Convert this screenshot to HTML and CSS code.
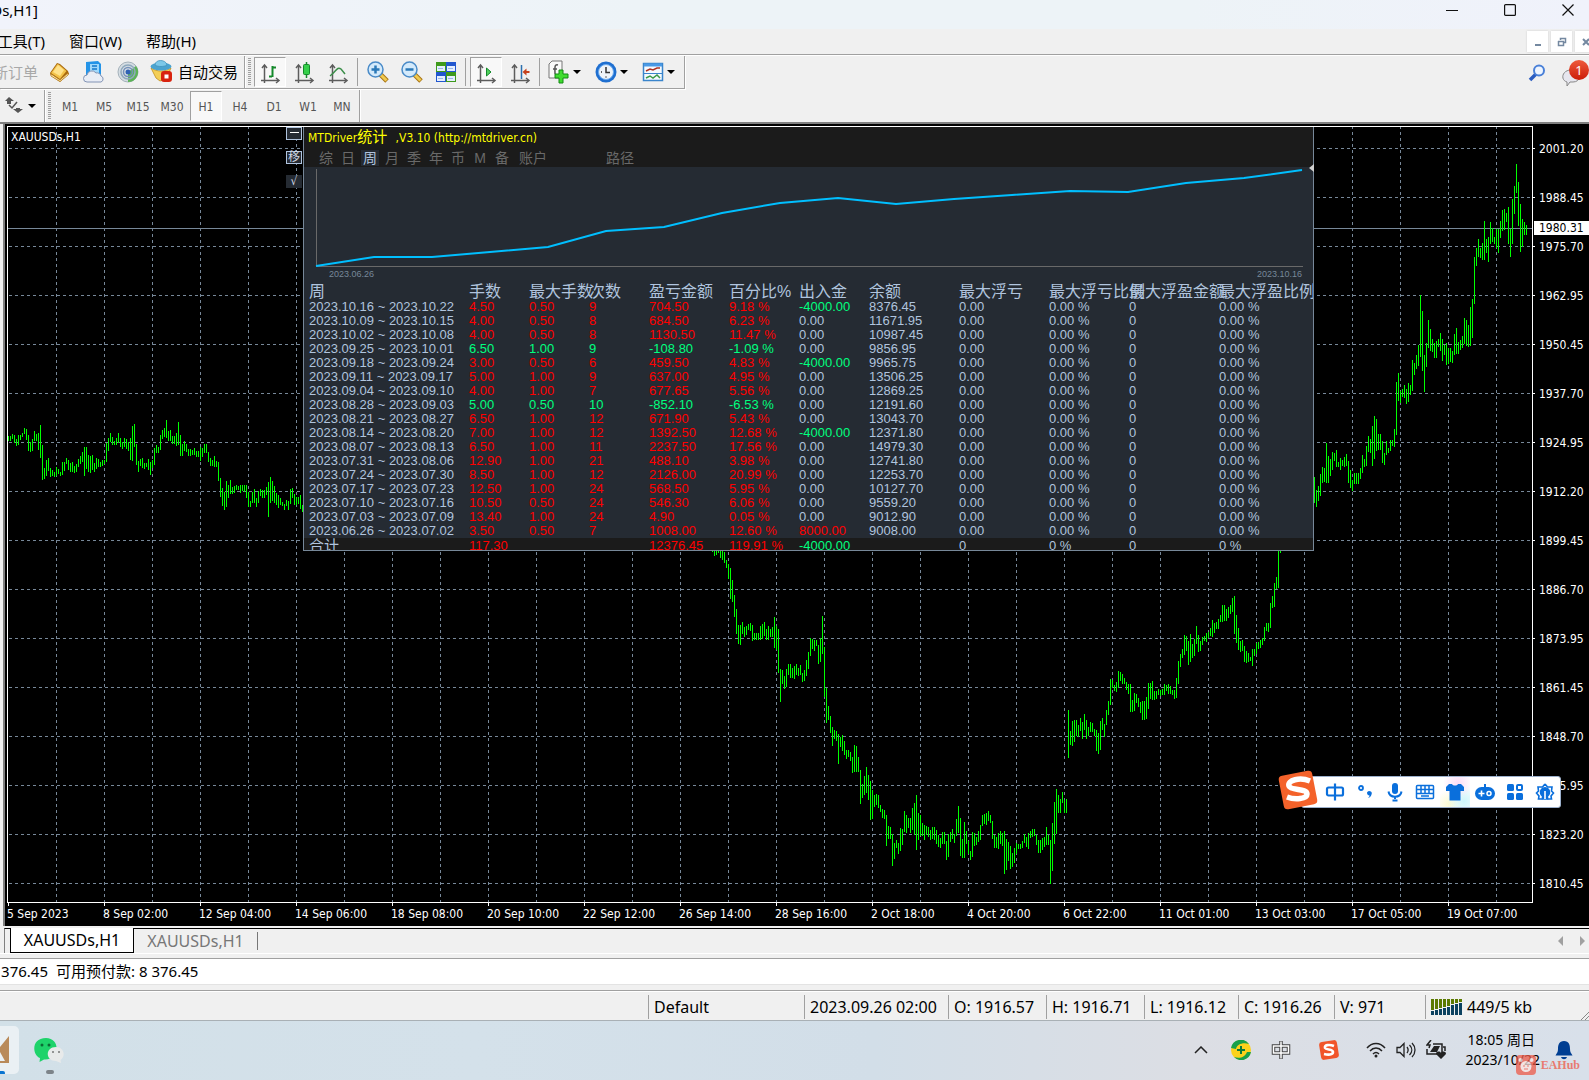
FILE: index.html
```html
<!DOCTYPE html>
<html lang="zh-CN">
  <head>
    <meta charset="UTF-8" />
    <meta name="viewport" content="width=device-width, initial-scale=1.0" />
    <title>XAUUSDs,H1</title>
    <link rel="stylesheet" href="styles.css">
  </head>
  <body>
    <header class="titlebar">
      <div class="title-text"><span>[XAUUSDs,H1]</span></div>
      <div class="window-buttons">
        <button aria-label="最小化"><svg width="12" height="12"><path d="M0 6.5h12" stroke="#111" /></svg></button>
        <button aria-label="最大化"><svg width="12" height="12"><rect x="0.6" y="0.6" width="10.8" height="10.8" rx="1" fill="none" stroke="#111" stroke-width="1.2" /></svg></button>
        <button aria-label="关闭"><svg width="12" height="12"><path d="M0.5 0.5l11 11M11.5 0.5l-11 11" stroke="#111" stroke-width="1.2" /></svg></button>
      </div>
    </header>

    <nav class="menubar">
      <button class="menu-first">工具(T)</button>
      <button>窗口(W)</button>
      <button>帮助(H)</button>
      <div class="mdi-buttons">
        <button aria-label="最小化图表"><svg width="10" height="10"><path d="M2 8h6" stroke="#7488a0" stroke-width="2" /></svg></button>
        <button aria-label="还原图表"><svg width="10" height="10" fill="none" stroke="#7488a0"><path d="M3.5 3V1.500h5v4H7M3 1.500h6" stroke-width="1.500" /><path d="M1 4.500h6M1.500 4v4.500h5V4" stroke-width="1.500" /></svg></button>
        <button aria-label="关闭图表"><svg width="10" height="10"><path d="M2 2l6 6M8 2l-6 6" stroke="#7488a0" stroke-width="2" /></svg></button>
      </div>
    </nav>

    <div class="toolbar-row">
      <div class="toolbar">
        <button class="new-order" disabled><span>新订单</span></button>
        <button class="tool" aria-label="市场报价">
          <svg width="24" height="24"><path d="M2 13L9 3l3 1 8 7 1 3-9 8-9-6z" fill="#a8690d" /><path d="M3 13L9.500 4l2 1 7 6-6.500 8z" fill="#f3c34a" /><path d="M5 12l5-7 6 5-4 6z" fill="#ffe28a" /><path d="M12 20l8-7v2l-8 6.500L3 16v-2z" fill="#fff2b8" stroke="#b87815" stroke-width=".7" /></svg>
        </button>
        <button class="tool" aria-label="数据窗口">
          <svg width="24" height="24"><path d="M4 2l12-1 3 3v13H4z" fill="#2494e8" /><path d="M8 4h9v11H8z" fill="#9fd8fb" /><path d="M10 6h5M10 9h5" stroke="#1478cc" stroke-width="1.500" /><path d="M5 22a3.500 3.500 0 0 1 0-7 5 5 0 0 1 9-2 4 4 0 0 1 5 3 3.200 3.200 0 0 1 0 6z" fill="#e9edf5" stroke="#8293b4" /></svg>
        </button>
        <button class="tool" aria-label="信号">
          <svg width="24" height="24" fill="none"><circle cx="12" cy="12" r="10" fill="#d5dde3" stroke="#a4b1ba" /><path d="M12 12V22A10 10 0 0 0 20 6z" fill="#5cb357" /><circle cx="12" cy="12" r="7" stroke="#8fa9bd" stroke-width="1.500" /><circle cx="12" cy="12" r="4.500" stroke="#7591ba" stroke-width="1.500" /><circle cx="12" cy="12" r="2.500" fill="#2f62b4" /></svg>
        </button>
        <button class="auto-trade">
          <svg width="24" height="24"><path d="M2 9c6 4 14 4 20 0l-5 11-6 2-4-3z" fill="#f4cf58" stroke="#c28f1c" stroke-width=".8" /><ellipse cx="12" cy="7.500" rx="10.500" ry="4" fill="#4aa3cf" /><path d="M6 6c0-6 11-6 12 0-3 2-9 2-12 0z" fill="#7cc8e8" stroke="#388cb8" stroke-width=".7" /><rect x="12" y="12" width="11" height="11" rx="3" fill="#d8230f" /><rect x="15.500" y="15.500" width="4" height="4" fill="#fff" /></svg>
          自动交易
        </button>
      </div>
      <div class="toolbar">
        <span class="grip"></span>
        <button class="tool pressed" aria-label="柱状图">
          <svg width="24" height="24" fill="none"><g class="axes"><path d="M6.500 6v17M3 20.500h17" /><path d="M4 8l2.500-3L9 8M18 18l3 2.500-3 2.500" /></g><path d="M14.500 6v11M11 16.500h3M15 7.500h3" stroke="#15892b" stroke-width="2" /></svg>
        </button>
        <button class="tool" aria-label="阴阳烛">
          <svg width="24" height="24" fill="none"><g class="axes"><path d="M6.500 6v17M3 20.500h17" /><path d="M4 8l2.500-3L9 8M18 18l3 2.500-3 2.500" /></g><path d="M14.500 2v16" stroke="#15892b" stroke-width="1.500" /><rect x="11.500" y="4.500" width="6" height="10" rx="1" fill="#35cf4a" stroke="#15892b" /></svg>
        </button>
        <button class="tool" aria-label="折线图">
          <svg width="24" height="24" fill="none"><g class="axes"><path d="M6.500 6v17M3 20.500h17" /><path d="M4 8l2.500-3L9 8M18 18l3 2.500-3 2.500" /></g><path d="M4 16C10 12 11 6 15 9l4 5" stroke="#3c8e4a" stroke-width="1.500" /></svg>
        </button>
        <span class="sep"></span>
        <button class="tool" aria-label="放大">
          <svg width="24" height="24" fill="none"><path d="M14 14l7 7" stroke="#a87412" stroke-width="5" /><path d="M14 14l6.500 6.500" stroke="#f0ca50" stroke-width="3" /><circle cx="9.500" cy="9.500" r="7.500" fill="#d4eafb" stroke="#4a8bc8" stroke-width="1.500" /><path d="M9.500 5.500v8M5.500 9.500h8" stroke="#2a78b8" stroke-width="2.500" /></svg>
        </button>
        <button class="tool" aria-label="缩小">
          <svg width="24" height="24" fill="none"><path d="M14 14l7 7" stroke="#a87412" stroke-width="5" /><path d="M14 14l6.500 6.500" stroke="#f0ca50" stroke-width="3" /><circle cx="9.500" cy="9.500" r="7.500" fill="#d4eafb" stroke="#4a8bc8" stroke-width="1.500" /><path d="M5.500 9.500h8" stroke="#2a78b8" stroke-width="2.500" /></svg>
        </button>
        <button class="tool" aria-label="平铺窗口">
          <svg width="24" height="24"><path d="M2 2h10v10H2zM12 12h10v10H12z" fill="#3f9a1c" /><path d="M12 2h10v10H12zM2 12h10v10H2z" fill="#2257cf" /><path d="M3 6h8v5H3zM13 6h8v5h-8zM3 16h8v5H3zM13 16h8v5h-8z" fill="#e6efff" /><path d="M4 8.500h5M14 8.500h5M4 18.500h5M14 18.500h5" stroke="#9ab8e8" /></svg>
        </button>
        <span class="sep"></span>
        <button class="tool pressed" aria-label="自动滚动">
          <svg width="24" height="24" fill="none"><g class="axes"><path d="M6.500 6v17M3 20.500h17" /><path d="M4 8l2.500-3L9 8M18 18l3 2.500-3 2.500" /></g><path d="M12.500 8v8l4.500-4z" fill="#4fd05c" stroke="#15892b" /></svg>
        </button>
        <button class="tool" aria-label="图表平移">
          <svg width="24" height="24" fill="none"><g class="axes"><path d="M6.500 6v17M3 20.500h17" /><path d="M4 8l2.500-3L9 8M18 18l3 2.500-3 2.500" /></g><path d="M13.500 5v14" stroke="#2b6fae" stroke-width="1.500" /><path d="M14.500 12l4-3.500V11h3v2h-3v2.500z" fill="#c6401c" /></svg>
        </button>
        <span class="sep"></span>
        <button class="tool drop" aria-label="技术指标">
          <svg width="24" height="24"><path d="M2 4l3-3h10v17H2z" fill="#fafafa" stroke="#777" /><path d="M11 5c-4-1-3 3-3 9M6 9h4" fill="none" stroke="#555" stroke-width="1.500" /><path d="M12 10h4v4h5v4h-5v5h-4v-5H8v-4h4z" fill="#3fdc2f" stroke="#138a15" /></svg>
          <i class="caret"></i>
        </button>
        <button class="tool drop" aria-label="时间周期">
          <svg width="24" height="24" fill="none"><circle cx="12" cy="12" r="10.500" fill="#1f6fd0" /><circle cx="12" cy="12" r="7.500" fill="#eef3f8" stroke="#6aaaf0" /><path d="M12 7v5.500h4M7 12h1M12 16.500v1" stroke="#333" stroke-width="1.500" /></svg>
          <i class="caret"></i>
        </button>
        <button class="tool drop" aria-label="模板">
          <svg width="24" height="24" fill="none"><rect x="2.500" y="3.500" width="19" height="17" fill="#f4faff" stroke="#3a85cc" stroke-width="1.500" /><path d="M3 5h18" stroke="#4a9ae6" stroke-width="3" /><path d="M3 13.500h18" stroke="#3a85cc" /><path d="M5 11l4-2 3 1 4-2h3" stroke="#b03222" stroke-width="1.500" /><path d="M5 18l4-2 3 2 4-3 3 3" stroke="#3a9a48" stroke-width="1.500" /></svg>
          <i class="caret"></i>
        </button>
      </div>
      <div class="toolbar-right">
        <button aria-label="搜索"><svg width="18" height="18" fill="none"><path d="M8 10l-6 6" stroke="#2a5cc0" stroke-width="3.500" /><circle cx="11" cy="6.500" r="5" fill="#eef5ff" stroke="#4a80d8" stroke-width="2" /></svg></button>
        <button class="chat" aria-label="消息"><svg width="20" height="20"><path d="M10 2c11 0 11 12 2 12H9l-3 4v-4C-1 12 1 2 10 2z" fill="#e6e6ee" stroke="#888" /></svg><span class="badge">1</span></button>
      </div>
    </div>

    <div class="toolbar-row periods-row">
      <div class="toolbar arrows">
        <button aria-label="箭头">
          <svg width="20" height="20"><path d="M5 1l5 4h-3v3H3V5H1zM14 17l-5-4h3v-1h4v1h3z" fill="#555" /><path d="M5 9l3 3 5-6" stroke="#555" stroke-width="1.500" fill="none" /></svg>
          <i class="caret"></i>
        </button>
      </div>
      <div class="toolbar">
        <span class="grip"></span>
        <button class="period">M1</button>
        <button class="period">M5</button>
        <button class="period">M15</button>
        <button class="period">M30</button>
        <button class="period pressed">H1</button>
        <button class="period">H4</button>
        <button class="period">D1</button>
        <button class="period">W1</button>
        <button class="period">MN</button>
      </div>
    </div>

    <main class="chart">
      <div class="plot">
        <span class="symbol">XAUUSDs,H1</span>
        <svg id="plot" width="100%" height="100%"></svg>
      </div>
      <div class="price-axis" id="priceAxis"></div>
      <div class="time-axis" id="timeAxis"></div>
      <span class="price-now">1980.31</span>

      <div class="side-buttons">
        <button aria-label="收起"><svg width="13" height="11"><path d="M2 4.500h9" stroke="#fff" /></svg></button>
        <button>移</button>
        <button class="plain">√</button>
      </div>

      <section class="stats">
        <div class="stats-head">
          <h1>MTDriver<span>统计</span> ,V3.10 (http://mtdriver.cn)</h1>
          <div class="stats-tabs">
            <button>综</button>
            <button>日</button>
            <button class="active">周</button>
            <button>月</button>
            <button>季</button>
            <button>年</button>
            <button>币</button>
            <button>M</button>
            <button>备</button>
            <button class="wide">账户</button>
            <button class="wide path">路径</button>
          </div>
        </div>
        <svg class="equity" width="100%" height="100">
          <path d="M12.500 2v97.500H999" fill="none" stroke="#696969" />
          <polyline points="12,99 70,90 128,90 186,85 244,80 302,64 360,60 418,46 476,36 534,31 592,37 650,32 708,28 766,24 824,25 882,16 940,11 998,3" fill="none" stroke="#00bfff" stroke-width="2" />
        </svg>
        <div class="equity-dates"><span>2023.06.26</span><span>2023.10.16</span></div>
        <table>
          <colgroup>
            <col class="w160"><col class="w60"><col class="w60"><col class="w60"><col class="w80"><col class="w70"><col class="w70"><col class="w90"><col class="w90"><col class="w80"><col class="w90"><col class="w90">
          </colgroup>
          <thead>
            <tr>
              <th>周</th><th>手数</th><th>最大手数</th><th>次数</th><th>盈亏金额</th><th>百分比%</th><th>出入金</th><th>余额</th><th>最大浮亏</th><th>最大浮亏比例</th><th>最大浮盈金额</th><th>最大浮盈比例</th>
            </tr>
          </thead>
          <tbody id="weeks"></tbody>
          <tfoot>
            <tr>
              <td class="sum">合计</td><td class="red">117.30</td><td></td><td></td><td class="red">12376.45</td><td class="red">119.91 %</td><td class="green">-4000.00</td><td></td><td>0</td><td>0 %</td><td>0</td><td>0 %</td>
            </tr>
          </tfoot>
        </table>
      </section>
      <i class="stats-arrow"></i>

      <div class="ime">
        <svg class="ime-logo" width="42" height="42"><rect x="4" y="4" width="34" height="34" rx="4" fill="#f4622a" transform="rotate(-11 21 21)" /><path d="M33 12C23 8 10 11 12 17c2 5 18 2 18 8 0 5-12 6-20 3" fill="none" stroke="#fff" stroke-width="5.500" /></svg>
        <button aria-label="中文"><svg width="20" height="20" fill="none" stroke="#0a6fdc" stroke-width="2.200"><rect x="2" y="5.500" width="16" height="8" rx="1.500" /><path d="M10 1.500v17" /></svg></button>
        <button aria-label="标点"><svg width="20" height="20"><circle cx="6" cy="6" r="2" fill="none" stroke="#0a6fdc" stroke-width="1.800" /><path d="M12 10.500a2.400 2.400 0 1 1 4.500 2c-.5 2-1.500 3-3.500 3.500 1-1 1.500-1.500 1.500-2.500-1.500 0-2.500-1-2.500-3z" fill="#0a6fdc" /></svg></button>
        <button aria-label="语音"><svg width="20" height="20" fill="none" stroke="#0a6fdc" stroke-width="2"><rect x="7" y="1" width="6" height="11" rx="3" fill="#0a6fdc" stroke="none" /><path d="M3.500 9.500c1 7 12 7 13 0M10 15v2M7.500 18.500h5" /></svg></button>
        <button aria-label="键盘"><svg width="20" height="20" fill="none" stroke="#0a6fdc" stroke-width="1.500"><rect x="1.500" y="3.500" width="17" height="13" rx="1" /><path d="M2 7.500h16M2 11.500h16M6 4v8M10 4v8M14 4v8M6 14h8" /></svg></button>
        <button class="skin" aria-label="皮肤"><svg width="20" height="20"><path d="M4 2h3c1 2 5 2 6 0h3l3 3v4h-3.500v9.500h-11V9H1V5z" fill="#0a6fdc" /></svg></button>
        <button aria-label="游戏"><svg width="20" height="20"><path d="M10 2v4" stroke="#0a6fdc" stroke-width="2" /><rect x="0" y="5" width="20" height="13" rx="6.500" fill="#0a6fdc" /><path d="M3.500 11.500h6M6.500 8.500v6" stroke="#fff" stroke-width="1.600" /><circle cx="14" cy="11.500" r="2" fill="none" stroke="#fff" stroke-width="1.500" /></svg></button>
        <button aria-label="工具箱"><svg width="20" height="20" fill="#0a6fdc"><rect x="2" y="2" width="7" height="7" rx="1.500" /><rect x="2" y="11" width="7" height="7" rx="1.500" /><rect x="11" y="11" width="7" height="7" rx="1.500" /><rect x="12" y="3" width="5" height="5" rx="1" fill="none" stroke="#0a6fdc" stroke-width="2" /></svg></button>
        <button aria-label="设置"><svg width="20" height="20" fill="none" stroke="#0a6fdc" stroke-width="1.600"><path d="M10 2l2.500 3H17l-.5 4 2 2-2.500 3 .5 3h-4M10 2L7.500 5H3l.5 4-2 2L4 14l-.5 3h4" /><path d="M7.500 17v-3a4.500 4.500 0 1 1 5 0V17z" fill="#0a6fdc" /><path d="M10 9v8" stroke="#fff" /></svg></button>
      </div>
    </main>

    <div class="chart-tabs">
      <div class="tabs-inner">
        <button class="tab current">XAUUSDs,H1</button>
        <button class="tab">XAUUSDs,H1</button>
        <div class="tab-scroll"><button aria-label="向左"><i class="left"></i></button><button aria-label="向右"><i class="right"></i></button></div>
      </div>
    </div>

    <div class="account">
      <div class="balance"><span>8 376.45</span></div>
      <span>可用预付款: 8 376.45</span>
    </div>

    <footer class="status">
      <span class="cell fill"></span>
      <span class="cell w156">Default</span>
      <span class="cell w144">2023.09.26 02:00</span>
      <span class="cell w98">O: 1916.57</span>
      <span class="cell w98">H: 1916.71</span>
      <span class="cell w94">L: 1916.12</span>
      <span class="cell w96">C: 1916.26</span>
      <span class="cell w91">V: 971</span>
      <span class="cell w164">
        <svg width="31" height="16"><path d="M1.500 0v11M5.500 0v10M9.500 0v9M13.500 0v8M17.500 0v7M21.500 0v5M25.500 0v4M29.500 0v3" stroke="#5b7a00" stroke-width="3" /><path d="M1.500 12v4M5.500 11v5M9.500 10v6M13.500 9v7M17.500 8v8M21.500 6v10M25.500 5v11M29.500 4v12" stroke="#0c4260" stroke-width="3" /></svg>
        449/5 kb
      </span>
      <svg class="resize" width="8" height="8"><path d="M0 8l8-8M4 8l4-4" stroke="#888" /></svg>
    </footer>

    <div class="taskbar">
      <button class="app running" aria-label="MetaTrader"><svg width="19" height="48"><path d="M9 10v27H0v-2h5L0 26v-5z" fill="#b98a5a" /><path d="M0 49v-4h3a2 2 0 0 1 0 4z" fill="#0a74d0" /></svg></button>
      <button class="app wechat" aria-label="微信">
        <svg width="32" height="48"><path d="M12 12c-15 0-14 17-6 20l-.5 4 4.500-2.500c16 1 17-21.500 2-21.500z" fill="#1ed36a" /><circle cx="8" cy="19" r="1.500" fill="#0b6b35" /><circle cx="15" cy="19" r="1.500" fill="#0b6b35" /><path d="M22 21c-11 0-11 14 0 14l5 2-.5-3c6-4 3-13-4.500-13z" fill="#e8eaea" /><circle cx="19" cy="26" r="1" fill="#777" /><circle cx="25" cy="26" r="1" fill="#777" /><rect x="12" y="44" width="8" height="4" rx="2" fill="#7d8489" /></svg>
      </button>
      <div class="tray">
        <button class="w40" aria-label="显示隐藏的图标"><svg width="14" height="8" fill="none"><path d="M1 7l6-6 6 6" stroke="#222" stroke-width="1.500" /></svg></button>
        <button class="w40" aria-label="安全卫士"><svg width="20" height="20"><circle cx="10" cy="10" r="10" fill="#fbd21b" /><path d="M0 8A10 10 0 0 1 18 4C12 2 6 4 5 9zM20 12A10 10 0 0 1 3 17c6 2 11 0 13-5z" fill="#17a04a" /><path d="M10 6v8M6 10h8" stroke="#0a7a3a" stroke-width="2" /></svg></button>
        <button class="w40" aria-label="输入法中文"><svg width="20" height="20" fill="none"><path d="M10 1v18M2.500 6h15v7h-15z" stroke="#444" stroke-width="3.500" /><path d="M10 1.500v17M2.500 6h15v7h-15z" stroke="#fff" stroke-width="1.500" /></svg></button>
        <button class="w56" aria-label="搜狗输入法"><svg width="20" height="20"><rect x="1" y="1" width="18" height="18" rx="3" fill="#f1552a" transform="rotate(-9 10 10)" /><path d="M15 6C10 4 5 5 6 8c1 2 8 1 8 4s-5 3-9 2" fill="none" stroke="#fff" stroke-width="2.600" /></svg></button>
        <button class="w30 network" aria-label="网络"><svg width="20" height="16" fill="none" stroke="#222" stroke-width="1.500"><path d="M1 6c5-6 13-6 18 0M4 9c3.500-4 8.500-4 12 0M7 12c2-2 4-2 6 0" /><circle cx="10" cy="14" r="1.500" fill="#222" stroke="none" /></svg></button>
        <button class="w30" aria-label="音量"><svg width="20" height="16" fill="none" stroke="#222" stroke-width="1.300"><path d="M1 5.500h3l4-4v13l-4-4H1z" /><path d="M11 5c1.500 2 1.500 4 0 6M13.500 3c3 3 3 7 0 10M16 1c4 4 4 10 0 14" /></svg></button>
        <button class="w30" aria-label="电池"><svg width="20" height="20" fill="none"><path d="M7 4h9v10H1V9" stroke="#222" stroke-width="1.500" /><path d="M8 6h6l-3 6H4l2-3z" fill="#222" /><path d="M5 0L1 5h3L3 8" stroke="#222" stroke-width="1.500" /><path d="M17 7h2v4" stroke="#222" stroke-width="1.500" /><path d="M15 19l-5-5c0-3 4-3 5-1 1-2 5-2 5 1z" fill="#222" /></svg></button>
        <div class="clock"><span>18:05 周日</span><span>2023/10/22</span></div>
        <button class="bell" aria-label="通知"><svg width="18" height="20"><path d="M9 1c5 0 6 4 6 8 0 3 1 4 2.500 6.500H.5C2 13 3 12 3 9c0-4 1-8 6-8z" fill="#003e92" /><path d="M6 17h6c-1 3-5 3-6 0z" fill="#003e92" /></svg></button>
      </div>
      <div class="watermark">
        <svg width="20" height="20"><rect width="20" height="20" rx="4" fill="#ee5a48" /><circle cx="10" cy="11.500" r="5.500" fill="#fbe4e0" /><circle cx="4.500" cy="5" r="2" fill="#fbe4e0" /><circle cx="15.500" cy="5" r="2" fill="#fbe4e0" /><path d="M8 10v2M12 10v2M8 14h4" stroke="#ee5a48" /></svg>
        EAHub
      </div>
    </div>

    <script src="script.js"></script>
  </body>
</html>
```
FILE: styles.css
```css
* {
  box-sizing: border-box;
}
body {
  margin: 0;
  min-height: 100vh;
  display: flex;
  flex-direction: column;
  overflow: hidden;
  background-color: #f0f0f0;
  color: #000;
  font-family: "Noto Sans", "Noto Sans CJK SC", sans-serif;
  font-size: 15px;
}
button {
  margin: 0;
  padding: 0;
  border: none;
  background: none;
  color: inherit;
  font: inherit;
  display: flex;
  align-items: center;
  justify-content: center;
  white-space: nowrap;
}
svg {
  display: block;
  flex-shrink: 0;
}

/* title and menu */
.titlebar {
  height: 29px;
  display: flex;
  justify-content: space-between;
  background: linear-gradient(90deg, #f1f3fb, #edf3f7 40%, #edf3f7 75%, #f0f2fb);
}
.title-text,
.balance {
  display: flex;
  justify-content: flex-end;
  overflow: hidden;
  white-space: nowrap;
}
.title-text {
  width: 38px;
  line-height: 20px;
}
.window-buttons {
  display: flex;
  height: 20px;
}
.window-buttons button {
  width: 58px;
}
.window-buttons button:last-child {
  width: 42px;
  margin-left: 8px;
}
.menubar {
  height: 26px;
  display: flex;
  align-items: center;
  gap: 24px;
  border-bottom: 1px solid #a0a0a0;
}
.menubar > button {
  padding-bottom: 2px;
}
.menu-first {
  width: 45px;
  justify-content: flex-end;
  overflow: hidden;
}
.mdi-buttons {
  display: flex;
  gap: 3px;
  margin-left: auto;
  margin-right: -7px;
}
.mdi-buttons button {
  width: 21px;
  height: 21px;
  background-color: #fff;
  box-shadow: 0 0 2px #ccc;
}

/* toolbars */
.toolbar-row {
  height: 35px;
  display: flex;
  border-top: 1px solid #fff;
}
.toolbar {
  height: 33px;
  display: flex;
  align-items: center;
  border-right: 1px solid #a0a0a0;
  border-bottom: 1px solid #a0a0a0;
  box-shadow: 1px 1px #fff;
}
.new-order {
  width: 43px;
  padding: 0 5px 2px 0;
  justify-content: flex-end;
  overflow: hidden;
  color: #a8a8a8;
}
.auto-trade {
  width: 99px;
  gap: 5px;
  padding: 0 0 2px 4px;
  justify-content: flex-start;
}
.grip {
  width: 3px;
  height: 28px;
  margin: 0 2px 0 3px;
  background: repeating-linear-gradient(#a0a0a0 0 1px, #f0f0f0 1px 2px);
}
.tool {
  width: 34px;
  height: 30px;
}
.tool.drop {
  width: 47px;
  gap: 2px;
  padding-left: 4px;
  justify-content: flex-start;
}
.pressed {
  border: 1px solid #fff;
  border-top-color: #a0a0a0;
  border-left-color: #a0a0a0;
  background-color: #f8f8f8;
}
.tool.pressed {
  width: 32px;
  margin: 0 1px;
}
.axes {
  stroke: #5c5c5c;
  stroke-width: 1.5px;
}
.sep {
  width: 1px;
  height: 28px;
  margin: 0 3px 0 2px;
  background-color: #a0a0a0;
}
.caret {
  border: 4px solid transparent;
  border-top-color: #000;
  border-bottom: none;
}
.toolbar-right {
  display: flex;
  gap: 15px;
  margin-left: auto;
  align-items: center;
}
.chat {
  position: relative;
  width: 28px;
  height: 32px;
  justify-content: flex-start;
  padding-top: 10px;
}
.badge {
  position: absolute;
  top: 3px;
  right: 0;
  width: 20px;
  height: 20px;
  border-radius: 10px;
  background: linear-gradient(#ee5a3c, #cc1c08);
  color: #fff;
  font-size: 13px;
  line-height: 20px;
}
.periods-row {
  height: 34px;
  border-top: none;
  border-bottom: 2px solid #808080;
}
.periods-row .toolbar {
  height: 32px;
  border-bottom: none;
  box-shadow: 1px 0 #fff;
}
.arrows {
  width: 45px;
}
.arrows button {
  gap: 4px;
  padding-left: 4px;
}
.period {
  width: 34px;
  height: 30px;
  padding-top: 2px;
  color: #555;
  font-family: "DejaVu Sans Condensed", "DejaVu Sans", sans-serif;
  font-size: 12px;
}
.period.pressed {
  width: 32px;
  margin: 0 1px;
}

/* price chart */
.chart {
  position: relative;
  flex: 1;
  display: grid;
  grid-template-columns: 1fr 56px;
  grid-template-rows: 1fr 23px;
  margin-left: 3px;
  border-left: 2px solid #808080;
  background-color: #000;
  color: #fff;
  font-family: "DejaVu Sans Condensed", "Noto Sans CJK SC", sans-serif;
  font-size: 12px;
}
.plot {
  position: relative;
  margin: 2px 0 0 2px;
  border: 1px solid #fff;
  overflow: hidden;
}
.symbol {
  position: absolute;
  left: 3px;
  top: 3px;
}
.price-axis {
  grid-column: 2;
  grid-row: 1 / 3;
}
.price-axis span {
  display: flex;
  align-items: center;
  height: 49px;
  gap: 4px;
}
.price-axis span::before {
  content: "";
  width: 2px;
  height: 1px;
  background-color: #fff;
}
.time-axis {
  grid-row: 2;
  grid-column: 1;
  display: grid;
  grid-template-columns: repeat(16, 96px);
  padding-left: 2px;
  line-height: 22px;
  overflow: hidden;
  white-space: nowrap;
}
.time-axis span {
  background: linear-gradient(#fff, #fff) 1px 0 / 1px 3px no-repeat;
}
.price-now {
  position: absolute;
  right: 0;
  top: 97px;
  width: 55px;
  padding-left: 5px;
  background-color: #fff;
  color: #000;
  line-height: 14px;
}

/* buttons beside the statistics panel */
.side-buttons {
  position: absolute;
  left: 281px;
  top: 3px;
  display: flex;
  flex-direction: column;
  gap: 11px;
}
.side-buttons button {
  width: 16px;
  height: 13px;
  border: 1px solid #b0c4de;
  background-color: #252b33;
  color: #d0d8e4;
  font-size: 12px;
  line-height: 11px;
}
.side-buttons .plain {
  border-color: #252b33;
}

/* statistics panel */
.stats {
  position: absolute;
  left: 298px;
  top: 3px;
  width: 1011px;
  height: 424px;
  border: 1px solid #778899;
  border-top: none;
  background-color: #252b33;
  color: #b0c4de;
  font-family: "Liberation Sans", "Noto Sans CJK SC", sans-serif;
  font-size: 13px;
  overflow: hidden;
}
.stats-head {
  height: 40px;
  background-color: #1b1b1b;
}
.stats h1 {
  margin: 0;
  height: 23px;
  padding-left: 4px;
  color: #ff0;
  font-family: "DejaVu Sans Condensed", "Noto Sans CJK SC", sans-serif;
  font-size: 12px;
  font-weight: normal;
  line-height: 20px;
}
.stats h1 span {
  margin-right: 5px;
  font-size: 15px;
}
.stats-tabs {
  display: flex;
  padding-left: 11px;
}
.stats-tabs button {
  width: 18px;
  height: 16px;
  margin: 0 2px;
  color: #696969;
  font-size: 14px;
  line-height: 16px;
}
.stats-tabs .wide {
  width: 36px;
}
.stats-tabs .path {
  margin-left: 49px;
}
.stats-tabs .active {
  background-color: #252b33;
  color: #b0c4de;
}
.equity-dates {
  display: flex;
  justify-content: space-between;
  height: 17px;
  padding: 0 11px 0 25px;
  color: #778899;
  font-size: 9px;
  line-height: 14px;
}
.stats table {
  width: 1000px;
  margin-left: 5px;
  table-layout: fixed;
  border-collapse: collapse;
}
.stats th,
.stats td {
  padding: 0;
  font-weight: normal;
  text-align: left;
  white-space: nowrap;
}
.stats th {
  font-size: 16px;
  line-height: 16px;
}
.stats td {
  line-height: 14px;
}
.stats tfoot tr {
  background-color: #1b1b1b;
  box-shadow: 0 0 0 5px #1b1b1b;
  clip-path: inset(0 -5px);
}
.stats tfoot td {
  line-height: 15px;
}
.stats .sum {
  font-size: 15px;
}
.stats .red {
  color: #f00;
}
.stats .green {
  color: #00ff7f;
}
.w60 { width: 60px; }
.w70 { width: 70px; }
.w80 { width: 80px; }
.w90 { width: 90px; }
.w160 { width: 160px; }
.stats-arrow {
  position: absolute;
  left: 1304px;
  top: 40px;
  border: 4px solid transparent;
  border-left: none;
  border-right: 5px solid #d0d0d0;
}

/* input method bar */
.ime {
  position: absolute;
  right: 28px;
  bottom: 118px;
  height: 32px;
  display: flex;
  align-items: center;
  padding: 0 0 0 18px;
  border: 1px solid #9cb0cc;
  border-radius: 3px;
  background-color: #fff;
}
.ime button {
  width: 30px;
  height: 30px;
}
.ime-logo {
  position: absolute;
  left: -25px;
  top: -8px;
}
.ime .skin {
  background: radial-gradient(circle at 60% 20%, #fbdcf6, transparent 50%), radial-gradient(circle at 80% 80%, #cdf6fb, transparent 50%), radial-gradient(circle at 30% 90%, #fdfbd2, transparent 40%);
}

/* chart tabs */
.chart-tabs {
  height: 28px;
  padding-top: 2px;
  border-bottom: 1px solid #fff;
}
.tabs-inner {
  display: flex;
  height: 25px;
  margin-left: 4px;
  padding-left: 5px;
  border-top: 1px solid #000;
  border-left: 1px solid #808080;
  font-size: 16px;
}
.tab {
  width: 124px;
  margin: 3px 0;
  border-right: 1px solid #777;
  color: #777;
  line-height: 18px;
}
.tab.current {
  margin: -1px 0 0;
  border: 1px solid #000;
  border-top: none;
  background-color: #fff;
  color: #000;
}
.tab-scroll {
  display: flex;
  gap: 17px;
  margin-left: auto;
  padding-right: 4px;
}
.left,
.right {
  border: 5px solid transparent;
  border-left-width: 0;
  border-right: 5px solid #a0a0a0;
}
.right {
  border-right-width: 0;
  border-left: 5px solid #a0a0a0;
}

/* account and status lines */
.account {
  height: 27px;
  display: flex;
  align-items: center;
  gap: 8px;
  margin-top: 4px;
  padding-bottom: 2px;
  border-top: 1px solid #a0a0a0;
  border-bottom: 1px solid #e3e3e3;
  background-color: #fff;
}
.balance {
  width: 48px;
}
.status {
  position: relative;
  display: flex;
  align-items: center;
  height: 30px;
  margin-top: 5px;
  border-top: 1px solid #a0a0a0;
  box-shadow: inset 0 1px #fff;
  font-size: 16px;
}
.cell {
  display: flex;
  align-items: center;
  gap: 5px;
  height: 24px;
  margin-top: 3px;
  padding-left: 5px;
  border-left: 1px solid #a0a0a0;
  white-space: nowrap;
}
.fill {
  flex: 1;
  border: none;
}
.w91 { width: 91px; }
.w94 { width: 94px; }
.w96 { width: 96px; }
.w98 { width: 98px; }
.w144 { width: 144px; }
.w156 { width: 156px; }
.w164 { width: 164px; }
.resize {
  position: absolute;
  right: 0;
  bottom: 0;
}

/* taskbar */
.taskbar {
  position: relative;
  display: flex;
  align-items: center;
  height: 60px;
  padding-bottom: 2px;
  border-top: 1px solid #a9b0b5;
  background: linear-gradient(90deg, #d2e0e8, #d4e1ea 30%, #d2dee8 55%, #dcdee4 75%, #d8e0ea);
}
.app.running {
  width: 19px;
  border-radius: 0 5px 5px 0;
  background-color: #eaf0f4;
}
.wechat {
  margin-left: 15px;
}
.tray {
  display: flex;
  align-items: center;
  margin-left: auto;
}
.w30 { width: 30px; }
.w40 { width: 40px; }
.w56 { width: 56px; }
.network {
  margin-left: 4px;
}
.clock {
  display: flex;
  flex-direction: column;
  align-items: flex-end;
  width: 89px;
  font-size: 14px;
  line-height: 20px;
}
.clock span:first-child {
  padding-right: 5px;
}
.bell {
  width: 49px;
  padding-right: 2px;
}
.watermark {
  position: absolute;
  right: 9px;
  bottom: 5px;
  display: flex;
  align-items: center;
  gap: 5px;
  color: #ee5a48;
  font-family: "Liberation Serif", serif;
  font-size: 12px;
  font-weight: bold;
  opacity: 0.75;
}
```
FILE: script.js
```js
// weekly statistics: week, lots, max lot, trades, profit, percent, deposit, balance
const weeks = [
  ["2023.10.16 ~ 2023.10.22", "4.50", "0.50", "9", "704.50", "9.18", "-4000.00", "8376.45"],
  ["2023.10.09 ~ 2023.10.15", "4.00", "0.50", "8", "684.50", "6.23", "0.00", "11671.95"],
  ["2023.10.02 ~ 2023.10.08", "4.00", "0.50", "8", "1130.50", "11.47", "0.00", "10987.45"],
  ["2023.09.25 ~ 2023.10.01", "6.50", "1.00", "9", "-108.80", "-1.09", "0.00", "9856.95"],
  ["2023.09.18 ~ 2023.09.24", "3.00", "0.50", "6", "459.50", "4.83", "-4000.00", "9965.75"],
  ["2023.09.11 ~ 2023.09.17", "5.00", "1.00", "9", "637.00", "4.95", "0.00", "13506.25"],
  ["2023.09.04 ~ 2023.09.10", "4.00", "1.00", "7", "677.65", "5.56", "0.00", "12869.25"],
  ["2023.08.28 ~ 2023.09.03", "5.00", "0.50", "10", "-852.10", "-6.53", "0.00", "12191.60"],
  ["2023.08.21 ~ 2023.08.27", "6.50", "1.00", "12", "671.90", "5.43", "0.00", "13043.70"],
  ["2023.08.14 ~ 2023.08.20", "7.00", "1.00", "12", "1392.50", "12.68", "-4000.00", "12371.80"],
  ["2023.08.07 ~ 2023.08.13", "6.50", "1.00", "11", "2237.50", "17.56", "0.00", "14979.30"],
  ["2023.07.31 ~ 2023.08.06", "12.90", "1.00", "21", "488.10", "3.98", "0.00", "12741.80"],
  ["2023.07.24 ~ 2023.07.30", "8.50", "1.00", "12", "2126.00", "20.99", "0.00", "12253.70"],
  ["2023.07.17 ~ 2023.07.23", "12.50", "1.00", "24", "568.50", "5.95", "0.00", "10127.70"],
  ["2023.07.10 ~ 2023.07.16", "10.50", "0.50", "24", "546.30", "6.06", "0.00", "9559.20"],
  ["2023.07.03 ~ 2023.07.09", "13.40", "1.00", "24", "4.90", "0.05", "0.00", "9012.90"],
  ["2023.06.26 ~ 2023.07.02", "3.50", "0.50", "7", "1008.00", "12.60", "8000.00", "9008.00"]
];

let rows = "";
weeks.forEach(function (w) {
  const color = w[4][0] === "-" ? "green" : "red";
  let cash = "";
  if (w[6][0] === "-") cash = "green";
  else if (w[6] !== "0.00") cash = "red";
  rows += `<tr><td>${w[0]}</td>`;
  for (let i = 1; i < 5; i++) rows += `<td class="${color}">${w[i]}</td>`;
  rows += `<td class="${color}">${w[5]} %</td><td class="${cash}">${w[6]}</td><td>${w[7]}</td>`;
  rows += "<td>0.00</td><td>0.00 %</td><td>0</td><td>0.00 %</td></tr>";
});
document.getElementById("weeks").innerHTML = rows;

// axes
const prices = ["2001.20", "1988.45", "1975.70", "1962.95", "1950.45", "1937.70", "1924.95", "1912.20", "1899.45", "1886.70", "1873.95", "1861.45", "1848.70", "1835.95", "1823.20", "1810.45"];
const times = ["5 Sep 2023", "8 Sep 02:00", "12 Sep 04:00", "14 Sep 06:00", "18 Sep 08:00", "20 Sep 10:00", "22 Sep 12:00", "26 Sep 14:00", "28 Sep 16:00", "2 Oct 18:00", "4 Oct 20:00", "6 Oct 22:00", "11 Oct 01:00", "13 Oct 03:00", "17 Oct 05:00", "19 Oct 07:00"];
const toSpan = (t) => `<span>${t}</span>`;
document.getElementById("priceAxis").innerHTML = prices.map(toSpan).join("");
document.getElementById("timeAxis").innerHTML = times.map(toSpan).join("");

// high-low bars, one every 2px from x
const segments = [
  { x: 8, bars: "436-441 436-441 434-439 435-443 439-446 435-445 435-440 433-437 428-434 429-440 435-451 442-452 439-451 431-441 434-441 433-450 425-458 445-480 468-479 460-476 458-471 468-477 470-476 472-477 467-476 469-474 472-476 462-475 462-471 458-464 460-470 463-472 462-472 466-473 464-472 459-467 456-464 452-462 447-476 447-469 455-472 456-473 455-470 463-472 458-469 459-467 462-467 460-466 460-464 443-462 438-451 433-442 437-445 441-445 438-445 433-443 438-447 442-449 438-447 439-449 442-451 438-460 426-461 424-447 444-465 461-472 459-466 458-468 463-469 463-467 459-470 462-475 460-468 448-465 445-453 447-453 435-450 430-439 428-437 420-438 431-441 430-441 436-444 436-444 433-446 422-445 435-456 444-456 441-451 444-452 449-456 449-456 450-455 448-455 451-457 451-457 447-461 448-457 444-453 444-453 452-462 458-466 460-466 456-467 461-467 462-481 478-497 488-506 492-510 481-507 485-498 480-494 487-494 486-493 485-490 486-490 485-493 485-491 485-492 485-498 492-507 501-507 492-503 489-503 498-507 491-503 489-496 490-498 490-498 487-495 482-517 477-503 481-501 486-503 493-505 495-508 498-505 502-506 504-510 500-506 501-510 489-504 488-498 494-505 497-505 497-504 495-509 505-512" },
  { x: 712, bars: "550-552 550-556 550-555 550-553 550-558 550-560 552-563 560-568 564-579 568-599 580-602 595-617 609-634 625-644 625-645 622-634 627-637 626-635 624-630 623-631 625-641 633-640 633-640 633-640 626-640 624-639 622-636 629-640 626-640 629-637 627-637 617-648 626-650 629-673 669-702 670-684 676-689 669-687 664-675 664-678 668-678 666-679 664-675 668-676 665-675 673-682 670-681 660-676 652-669 638-656 639-649 640-651 640-646 645-664 638-662 616-654 647-697 688-723 706-720 716-733 727-746 730-739 731-741 734-764 737-747 735-751 741-755 750-759 750-757 752-761 757-773 745-772 746-772 757-772 770-804 784-798 776-795 767-793 775-800 781-820 790-819 795-807 794-805 795-808 805-812 809-818 810-819 815-846 826-839 827-839 834-866 843-859 840-848 843-854 828-851 829-845 811-832 815-833 818-828 818-833 808-830 803-835 795-850 813-840 815-836 823-836 825-840 826-835 827-837 830-840 827-839 827-840 830-844 835-847 838-848 832-844 832-844 841-860 834-857 832-842 829-839 834-843 819-836 806-833 818-856 839-858 822-858 831-844 841-854 851-860 832-857 833-846 837-845 831-842 825-840 815-826 814-824 813-825 811-821 815-823 821-839 835-848 837-848 833-849 831-844 833-846 831-874 839-870 842-861 846-869 853-867 848-863 843-854 844-849 844-849 841-848 834-843 837-847 833-849 831-838 829-837 829-836 835-845 840-853 840-853 838-850 837-847 827-845 835-845 840-884 823-871 802-844 789-834 795-813 799-813 792-803 800-813 799-813" },
  { x: 1068, bars: "710-758 731-745 721-746 720-742 720-736 725-737 718-731 722-739 714-730 720-739 727-736 722-732 723-732 729-736 730-751 733-754 721-750 718-730 724-737 710-725 701-715 679-705 680-688 685-691 682-692 671-688 672-681 674-684 678-684 682-690 684-694 684-712 700-712 693-711 694-703 698-707 702-713 701-720 701-720 697-719 683-709 683-699 681-700 691-700 691-699 689-695 690-696 689-695 684-695 685-691 684-694 686-694 690-695 690-699 678-698 661-684 654-667 649-658 635-655 636-651 641-665 634-662 644-658 639-656 626-644 635-652 641-651 637-645 636-641 633-642 632-638 628-636 620-637 623-633 622-629 619-629 615-622 605-622 605-621 609-621 607-618 605-614 598-612 596-634 615-643 628-650 641-652 640-651 646-662 651-663 653-662 657-661 649-666 649-656 643-654 642-649 640-648 638-645 627-641 623-631 623-632 603-628 596-608 583-607 577-589 550-588 550-553" },
  { x: 1314, bars: "477-503 490-507 486-501 474-496 467-483 468-482 443-483 456-483 459-476 452-470 453-461 450-467 462-467 458-470 460-466 457-467 454-466 461-483 470-488 480-491 473-484 473-484 473-484 468-479 455-473 459-467 446-466 436-452 439-453 426-466 416-459 419-451 434-450 434-450 441-463 453-465 441-455 448-453 440-451 440-446 429-447 382-435 373-401 391-403 389-397 385-398 389-404 383-402 385-395 360-391 363-375 355-369 345-366 295-357 311-371 355-392 343-367 320-348 329-351 339-352 343-358 341-358 339-347 333-351 339-361 345-355 343-365 348-364 348-362 351-363 334-355 328-354 342-354 340-350 336-348 318-344 320-346 325-347 307-346 299-338 257-304 248-266 239-257 248-258 243-260 221-260 239-253 237-262 222-244 228-242 237-244 229-248 229-253 221-238 210-231 209-230 213-222 207-244 229-257 199-244 186-214 164-193 182-226 204-252 219-247 222-235 225-235" }
];

let grid = "";
for (let y = 148; y < 902; y += 49) grid += `M9 ${y}.5H1532`;
for (let x = 56; x < 1532; x += 48) grid += `M${x}.5 126V902`;

let bars = "";
segments.forEach(function (s) {
  s.bars.split(" ").forEach(function (bar, i) {
    const [high, low] = bar.split("-");
    bars += `M${s.x + i * 2}.5 ${high}V${low}`;
  });
});

// bar coordinates count from the window corner, the plot starts at 8,127
document.getElementById("plot").innerHTML = `
  <g transform="translate(-8,-127)" fill="none">
    <path d="${grid}" stroke="#778899" stroke-dasharray="3 3" />
    <path d="M8 228.5H1532" stroke="#778899" />
    <path d="${bars}" stroke="#00ff00" />
  </g>`;
```
